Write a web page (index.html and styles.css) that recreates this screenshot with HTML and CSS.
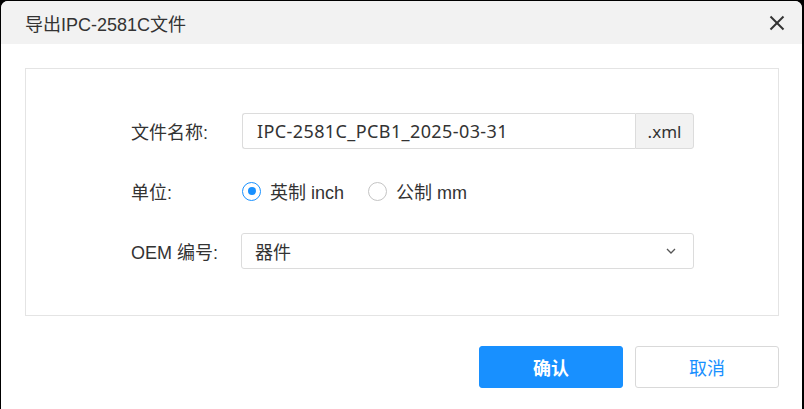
FILE: index.html
```html
<!DOCTYPE html>
<html>
<head>
  <meta charset="UTF-8">
  <title>导出IPC-2581C文件</title>
  <link rel="stylesheet" href="styles.css">
</head>
<body>
  <div class="dialog">
    <div class="dialog-header">
      <span class="dialog-title">导出IPC-2581C文件</span>
      <button class="close-btn">
        <svg width="16" height="16" viewBox="0 0 16 16" fill="none" stroke="#333" stroke-width="2">
          <path d="M1.5 1.5l13 13"></path>
          <path d="M14.5 1.5l-13 13"></path>
        </svg>
      </button>
    </div>

    <div class="dialog-body">
      <div class="form-panel">
        <div class="form-row">
          <label class="form-label">文件名称:</label>
          <div class="input-group">
            <input class="text-input" type="text" value="IPC-2581C_PCB1_2025-03-31">
            <span class="addon">.xml</span>
          </div>
        </div>

        <div class="form-row">
          <label class="form-label">单位:</label>
          <div class="radio-group">
            <label class="radio checked"><span class="radio-dot"></span>英制 inch</label>
            <label class="radio"><span class="radio-dot"></span>公制 mm</label>
          </div>
        </div>

        <div class="form-row">
          <label class="form-label">OEM 编号:</label>
          <div class="select">
            <span>器件</span>
            <svg width="10" height="6" viewBox="0 0 10 6" fill="none" stroke="#555" stroke-width="1.3">
              <path d="M1 1l4 4 4-4"></path>
            </svg>
          </div>
        </div>
      </div>
    </div>

    <div class="dialog-footer">
      <button class="btn btn-primary">确认</button>
      <button class="btn btn-default">取消</button>
    </div>
  </div>
</body>
</html>
```

FILE: styles.css
```css
html, body {
  margin: 0;
  padding: 0;
  background: #000;
  height: 100%;
}
body {
  font-family: "Liberation Sans", "Noto Sans CJK SC", sans-serif;
  color: #333;
  overflow: hidden;
}
.dialog {
  margin: 1px 2px 0 1px;
  height: 408px;
  background: #fff;
  border-radius: 7px 7px 0 0;
  overflow: hidden;
}
.dialog-header {
  height: 43px;
  background: #f2f2f2;
  display: flex;
  align-items: center;
  justify-content: space-between;
  padding: 0 17px 0 24px;
}
.dialog-title {
  font-size: 18px;
  color: #333;
}
.close-btn {
  background: none;
  border: none;
  padding: 0;
  cursor: pointer;
  display: flex;
  margin-top: 1px;
}
.dialog-body {
  padding: 24px 23px 0 24px;
}
.form-panel {
  border: 1px solid #e4e4e4;
  height: 248px;
  padding-top: 44px;
  box-sizing: border-box;
}
.form-row {
  display: flex;
  align-items: center;
  height: 36px;
  margin-bottom: 24px;
}
.form-label {
  width: 216px;
  text-align: left;
  font-size: 18px;
  color: #333;
  padding-left: 105px;
  box-sizing: border-box;
}
.input-group {
  display: flex;
  height: 36px;
}
.text-input {
  width: 393px;
  height: 36px;
  box-sizing: border-box;
  border: 1px solid #dcdcdc;
  border-right: none;
  border-radius: 3px 0 0 3px;
  padding: 0 14px;
  font-family: "Noto Sans", "Noto Sans CJK SC", sans-serif;
  font-size: 18px;
  letter-spacing: 0.4px;
  color: #333;
  outline: none;
}
.addon {
  width: 59px;
  height: 36px;
  box-sizing: border-box;
  background: #f2f2f2;
  border: 1px solid #dcdcdc;
  border-radius: 0 3px 3px 0;
  display: flex;
  align-items: center;
  justify-content: center;
  font-family: "Noto Sans", sans-serif;
  font-size: 17px;
  color: #333;
}
.radio-group {
  display: flex;
  gap: 24px;
}
.radio {
  display: flex;
  align-items: center;
  font-size: 18px;
  color: #333;
}
.radio-dot {
  width: 19px;
  height: 19px;
  border: 1px solid #c4c4c4;
  border-radius: 50%;
  box-sizing: border-box;
  margin-right: 9px;
  display: flex;
  align-items: center;
  justify-content: center;
}
.radio.checked .radio-dot {
  border-color: #1890ff;
}
.radio.checked .radio-dot::after {
  content: "";
  width: 8px;
  height: 8px;
  border-radius: 50%;
  background: #1890ff;
}
.select {
  width: 453px;
  height: 36px;
  box-sizing: border-box;
  border: 1px solid #dcdcdc;
  border-radius: 3px;
  margin-left: -1px;
  display: flex;
  align-items: center;
  justify-content: space-between;
  padding: 0 17px 0 13px;
  font-size: 18px;
  color: #333;
}
.dialog-footer {
  display: flex;
  justify-content: flex-end;
  gap: 12px;
  padding: 30px 23px 0 0;
}
.btn {
  width: 144px;
  height: 42px;
  border-radius: 3px;
  font-family: "Noto Sans CJK SC", sans-serif;
  font-size: 18px;
  cursor: pointer;
}
.btn-primary {
  background: #1890ff;
  border: 1px solid #1890ff;
  color: #fff;
  font-weight: bold;
}
.btn-default {
  background: #fff;
  border: 1px solid #d9d9d9;
  color: #1890ff;
}
```
